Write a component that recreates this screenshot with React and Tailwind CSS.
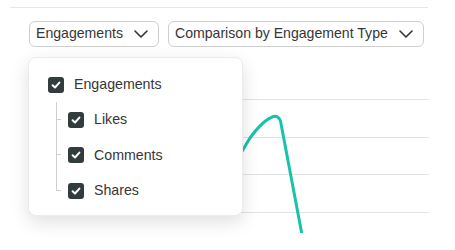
import React from "react";

const FONT = { fontFamily: '"Liberation Sans", Arial, sans-serif' };

function Chevron() {
  return (
    <svg width="14" height="8" viewBox="0 0 14 8" fill="none" className="shrink-0">
      <path d="M1 1L7 7L13 1" stroke="#333" strokeWidth="1.6" strokeLinecap="round" strokeLinejoin="round" />
    </svg>
  );
}

function Select({ label }) {
  return (
    <button
      type="button"
      className="h-[26px] flex items-center gap-[11px] pl-[6px] pr-[10px] border border-[#cfcfcf] rounded-[6px] bg-white text-[14.1px] text-[#363636]"
    >
      <span>{label}</span>
      <Chevron />
    </button>
  );
}

function Check() {
  return (
    <span className="w-4 h-4 rounded-[3px] bg-[#323c3c] flex items-center justify-center shrink-0">
      <svg width="12" height="12" viewBox="0 0 12 12" fill="none">
        <path d="M2.6 6.2L5 8.5L9.4 3.6" stroke="#fff" strokeWidth="2" strokeLinecap="round" strokeLinejoin="round" />
      </svg>
    </span>
  );
}

const children = ["Likes", "Comments", "Shares"];

function Dropdown() {
  return (
    <div className="absolute left-[28px] top-[57px] w-[215px] pt-[9px] pb-[6px] pl-[19px] bg-white rounded-[8px] border border-[#ececec] shadow-[0_6px_18px_rgba(0,0,0,0.13)]">
      <div className="h-[35.4px] flex items-center gap-[10px] text-[14.2px] text-[#363636]">
        <Check />
        <span>Engagements</span>
      </div>
      {children.map((c, i) => (
        <div key={c} className="h-[35.4px] flex pl-[8px]">
          <div className="flex flex-col w-[5px] mr-[7px]">
            <div className="h-1/2 border-l border-b border-[#cfcfcf]" />
            <div className={`flex-1 ${i < children.length - 1 ? "border-l border-[#cfcfcf]" : ""}`} />
          </div>
          <div className="flex items-center gap-[10px] text-[14.2px] text-[#363636]">
            <Check />
            <span>{c}</span>
          </div>
        </div>
      ))}
    </div>
  );
}

function Chart() {
  return (
    <svg width="400" height="172" viewBox="29 61 400 172" className="ml-[29px] mt-[14px] block">
      {[99, 137, 174, 212].map((y) => (
        <line key={y} x1="29" x2="429" y1={y + 0.5} y2={y + 0.5} stroke="#e2e2e2" strokeWidth="1" />
      ))}
      <path
        d="M215 200 C228 178, 238 157, 250 138 C258 127, 266 119, 273.5 116.5 Q278 115.5, 280.5 121 L303 240"
        fill="none"
        stroke="#17c3ab"
        strokeWidth="3"
        strokeLinecap="round"
        strokeLinejoin="round"
      />
    </svg>
  );
}

export default function App() {
  return (
    <div className="relative w-[455px] h-[250px] bg-white overflow-hidden" style={FONT}>
      <div className="pt-[7px] pl-[10px]">
        <div className="w-[418px] h-px bg-[#e6e6e6]" />
      </div>
      <div className="flex gap-[9px] ml-[29px] mt-[13px]">
        <Select label="Engagements" />
        <Select label="Comparison by Engagement Type" />
      </div>
      <Chart />
      <Dropdown />
    </div>
  );
}
